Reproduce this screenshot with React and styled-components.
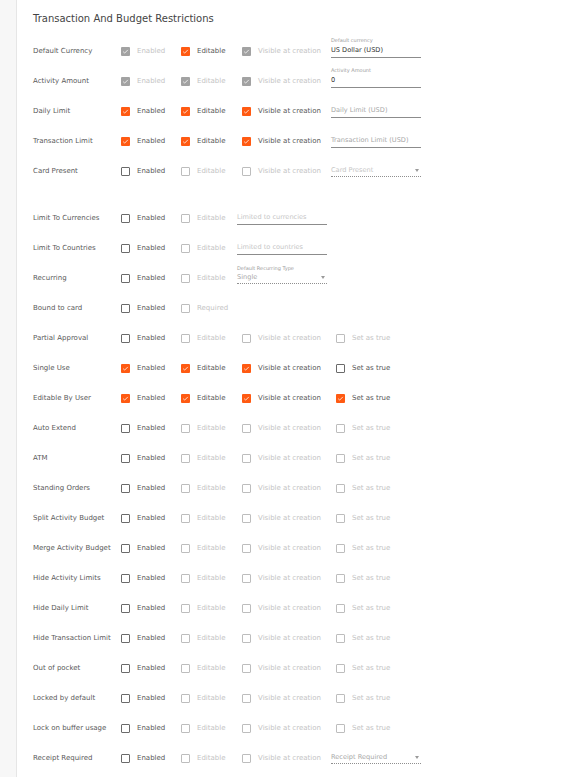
import React from 'react'
import styled, { createGlobalStyle } from 'styled-components'

const GlobalStyle = createGlobalStyle`
    html, body {
        margin:0;
        padding:0;
        background:#fff;
        font-family:"DejaVu Sans", "Liberation Sans", sans-serif;
    }
    *{ box-sizing:border-box; }
`

const Page = styled.div`
    display:flex;
    min-height:100vh;
`

const Sidebar = styled.div`
    width:17px;
    flex-shrink:0;
    background:#f7f7f7;
    border-right:1px solid #e6e6e6;
`

const Main = styled.div`
    flex:1;
    padding:13px 0 0 16px;
`

const Title = styled.h2`
    margin:0 0 11px 0;
    font-size:10px;
    line-height:12px;
    font-weight:400;
    color:#444;
`

const Row = styled.div`
    display:flex;
    align-items:center;
    height:30px;
    margin-bottom:${p => p.$after || 0}px;
`

const RowLabel = styled.div`
    width:83px;
    flex-shrink:0;
    font-size:7px;
    color:#5a5a5a;
    margin-top:-1px;
    white-space:nowrap;
`

const Option = styled.label`
    display:flex;
    align-items:center;
    gap:7px;
    width:${p => p.$w}px;
    flex-shrink:0;
    padding-left:5px;
    font-size:7px;
    white-space:nowrap;
    color:${p => p.$disabled ? '#c4c4c4' : '#575757'};
`

const Box = styled.span`
    width:9px;
    height:9px;
    flex-shrink:0;
    display:flex;
    align-items:center;
    justify-content:center;
    background:${p => p.$checked ? (p.$disabled ? '#a2a2a2' : '#ff5a12') : '#fff'};
    border:${p => p.$checked ? 'none' : `1px solid ${p.$disabled ? '#bdbdbd' : '#6a6a6a'}`};
    border-radius:1px;
`

const Field = styled.div`
    width:90px;
    flex-shrink:0;
    align-self:flex-end;
    margin-bottom:${p => p.$select ? 9 : 8}px;
    display:flex;
    flex-direction:column;
`

const Caption = styled.div`
    font-size:5px;
    line-height:7px;
    color:#9b9b9b;
    white-space:nowrap;
`

const Input = styled.div`
    display:flex;
    align-items:center;
    justify-content:space-between;
    height:${p => p.$select ? 12 : 14}px;
    padding-bottom:1px;
    font-size:6.6px;
    white-space:nowrap;
    color:${p => p.$tone === 'value' ? '#333' : p.$tone === 'faint' ? '#c6c6c6' : '#a8a8a8'};
    border-bottom:1px ${p => p.$select ? 'dotted #8f8f8f' : 'solid #8c8c8c'};
`

const Arrow = styled.svg`
    width:4px;
    height:3px;
    margin-right:2px;
    fill:#9a9a9a;
`

const Check = ({ checked, disabled }) => (
    <Box $checked={checked} $disabled={disabled}>
        {checked && (
            <svg width="7" height="7" viewBox="0 0 24 24">
                <path d="M4 12.5l5 5L20 6.5" fill="none" stroke="#fff" strokeWidth="2.6" />
            </svg>
        )}
    </Box>
)

const widths = { Enabled: 60, Editable: 61, 'Visible at creation': 94, 'Set as true': 80, Required: 80 }

// each option: [text, checked, disabled]
const rows = [
    { label: 'Default Currency', opts: [['Enabled', 1, 1], ['Editable', 1, 0], ['Visible at creation', 1, 1]],
        field: { caption: 'Default currency', text: 'US Dollar (USD)', tone: 'value' } },
    { label: 'Activity Amount', opts: [['Enabled', 1, 1], ['Editable', 1, 1], ['Visible at creation', 1, 1]],
        field: { caption: 'Activity Amount', text: '0', tone: 'value' } },
    { label: 'Daily Limit', opts: [['Enabled', 1, 0], ['Editable', 1, 0], ['Visible at creation', 1, 0]],
        field: { text: 'Daily Limit (USD)' } },
    { label: 'Transaction Limit', opts: [['Enabled', 1, 0], ['Editable', 1, 0], ['Visible at creation', 1, 0]],
        field: { text: 'Transaction Limit (USD)' } },
    { label: 'Card Present', opts: [['Enabled', 0, 0], ['Editable', 0, 1], ['Visible at creation', 0, 1]],
        field: { text: 'Card Present', tone: 'faint', select: true }, after: 17 },
    { label: 'Limit To Currencies', opts: [['Enabled', 0, 0], ['Editable', 0, 1]],
        field: { text: 'Limited to currencies', tone: 'faint' } },
    { label: 'Limit To Countries', opts: [['Enabled', 0, 0], ['Editable', 0, 1]],
        field: { text: 'Limited to countries', tone: 'faint' } },
    { label: 'Recurring', opts: [['Enabled', 0, 0], ['Editable', 0, 1]],
        field: { caption: 'Default Recurring Type', text: 'Single', select: true } },
    { label: 'Bound to card', opts: [['Enabled', 0, 0], ['Required', 0, 1]] },
    { label: 'Partial Approval', opts: [['Enabled', 0, 0], ['Editable', 0, 1], ['Visible at creation', 0, 1], ['Set as true', 0, 1]] },
    { label: 'Single Use', opts: [['Enabled', 1, 0], ['Editable', 1, 0], ['Visible at creation', 1, 0], ['Set as true', 0, 0]] },
    { label: 'Editable By User', opts: [['Enabled', 1, 0], ['Editable', 1, 0], ['Visible at creation', 1, 0], ['Set as true', 1, 0]] },
    ...['Auto Extend', 'ATM', 'Standing Orders', 'Split Activity Budget', 'Merge Activity Budget',
        'Hide Activity Limits', 'Hide Daily Limit', 'Hide Transaction Limit', 'Out of pocket',
        'Locked by default', 'Lock on buffer usage'].map(label => ({
        label,
        opts: [['Enabled', 0, 0], ['Editable', 0, 1], ['Visible at creation', 0, 1], ['Set as true', 0, 1]],
    })),
    { label: 'Receipt Required', opts: [['Enabled', 0, 0], ['Editable', 0, 1], ['Visible at creation', 0, 1]],
        field: { text: 'Receipt Required', select: true } },
]

const FormField = ({ caption, text, tone, select }) => (
    <Field $select={select}>
        {caption && <Caption>{caption}</Caption>}
        <Input $select={select} $tone={tone}>
            <span>{text}</span>
            {select && (
                <Arrow viewBox="0 0 4 3"><path d="M0 0h4L2 3z" /></Arrow>
            )}
        </Input>
    </Field>
)

const App = () => {
    return (
        <Page>
            <GlobalStyle />
            <Sidebar />
            <Main>
                <Title>Transaction And Budget Restrictions</Title>
                {rows.map(r => (
                    <Row key={r.label} $after={r.after}>
                        <RowLabel>{r.label}</RowLabel>
                        {r.opts.map(([text, checked, disabled]) => (
                            <Option key={text} $w={widths[text]} $disabled={disabled}>
                                <Check checked={!!checked} disabled={!!disabled} />
                                {text}
                            </Option>
                        ))}
                        {r.field && <FormField {...r.field} />}
                    </Row>
                ))}
            </Main>
        </Page>
    )
}

export default App
